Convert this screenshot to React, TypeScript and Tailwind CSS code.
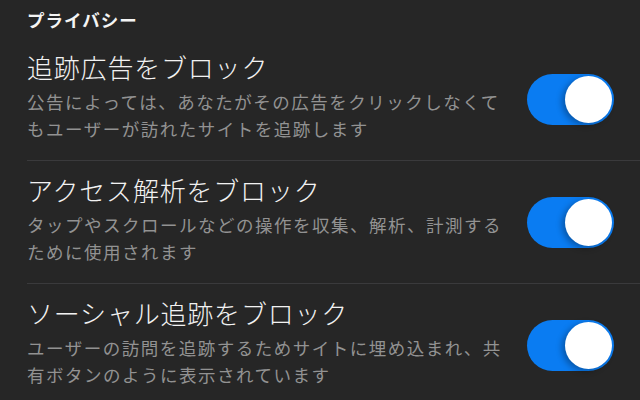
import React from "react";

const rows = [
  {
    title: "追跡広告をブロック",
    lines: ["公告によっては、あなたがその広告をクリックしなくて", "もユーザーが訪れたサイトを追跡します"],
  },
  {
    title: "アクセス解析をブロック",
    lines: ["タップやスクロールなどの操作を収集、解析、計測する", "ために使用されます"],
  },
  {
    title: "ソーシャル追跡をブロック",
    lines: ["ユーザーの訪問を追跡するためサイトに埋め込まれ、共", "有ボタンのように表示されています"],
  },
];

function Toggle() {
  return (
    <div className="relative w-[87px] h-[51px] rounded-full bg-[#0a7cf2] shrink-0">
      <div className="absolute right-[2px] top-[2px] w-[47px] h-[47px] rounded-full bg-white shadow-[-3px_2px_6px_rgba(0,0,0,0.3)]" />
    </div>
  );
}

export default function App() {
  return (
    <div
      className="w-[640px] h-[400px] overflow-hidden bg-[#262626] pl-[27px]"
      style={{ fontFamily: '"Noto Sans CJK JP", "Noto Sans", sans-serif' }}
    >
      <div className="h-[38px] pt-[8px] text-[17.5px] leading-[24px] font-bold tracking-[1px] text-[#f4f4f4]">
        プライバシー
      </div>
      {rows.map((r, i) => (
        <div key={i} className="flex h-[123px] border-b border-[#3a3a3c] pr-[26px] items-start">
          <div className="flex-1 pt-[12px] whitespace-nowrap">
            <div className="text-[26px] leading-[34px] tracking-[0.8px] font-light text-[#f2f2f2]">{r.title}</div>
            <div className="mt-[4px] text-[17.5px] leading-[27px] tracking-[1.5px] text-[#929292]">
              {r.lines[0]}
              <br />
              {r.lines[1]}
            </div>
          </div>
          <div className="self-center">
            <Toggle />
          </div>
        </div>
      ))}
    </div>
  );
}
